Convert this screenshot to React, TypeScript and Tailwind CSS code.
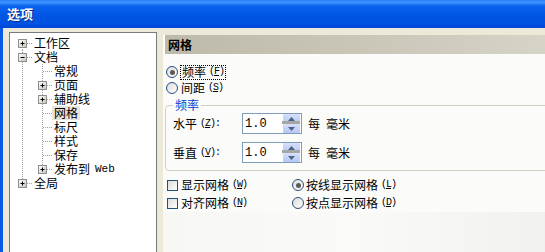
import React from "react";

const cjk = "font-['Noto_Sans_CJK_SC',sans-serif]";
const mono = "font-['Liberation_Mono',monospace] text-[10px]";

const Key = ({ k }: { k: string }) => (
  <span className={`${mono} ml-[3px] tracking-[-1px]`}>
    (<span className="underline underline-offset-1">{k}</span>)
  </span>
);

type V = "full" | "top" | "bottom" | "none";

const Cell = ({ v, h, box }: { v: V; h?: boolean; box?: "+" | "-" }) => {
  const y1 = v === "bottom" ? 7 : 0;
  const y2 = v === "top" ? 7 : 14;
  return (
    <svg width="20" height="14" className="shrink-0">
      <defs>
        <linearGradient id="bx" x1="0" y1="0" x2="1" y2="1">
          <stop offset="0" stopColor="#ffffff" />
          <stop offset="1" stopColor="#c6c3b6" />
        </linearGradient>
      </defs>
      {v !== "none" && (
        <line x1="10.5" x2="10.5" y1={y1} y2={y2} stroke="#a0a0a0" strokeDasharray="1 1" />
      )}
      {h && <line x1="11" x2="20" y1="7.5" y2="7.5" stroke="#a0a0a0" strokeDasharray="1 1" />}
      {box && (
        <g>
          <rect x="6.5" y="3.5" width="8" height="8" fill="url(#bx)" stroke="#8f8f8f" />
          <line x1="8.5" x2="12.5" y1="7.5" y2="7.5" stroke="#000" />
          {box === "+" && <line x1="10.5" x2="10.5" y1="5.5" y2="9.5" stroke="#000" />}
        </g>
      )}
    </svg>
  );
};

type Row = { label: React.ReactNode; cells: { v: V; h?: boolean; box?: "+" | "-" }[]; sel?: boolean };

const rows: Row[] = [
  { label: "工作区", cells: [{ v: "bottom", h: true, box: "+" }] },
  { label: "文档", cells: [{ v: "full", h: true, box: "-" }] },
  { label: "常规", cells: [{ v: "full" }, { v: "full", h: true }] },
  { label: "页面", cells: [{ v: "full" }, { v: "full", h: true, box: "+" }] },
  { label: "辅助线", cells: [{ v: "full" }, { v: "full", h: true, box: "+" }] },
  { label: "网格", cells: [{ v: "full" }, { v: "full", h: true }], sel: true },
  { label: "标尺", cells: [{ v: "full" }, { v: "full", h: true }] },
  { label: "样式", cells: [{ v: "full" }, { v: "full", h: true }] },
  { label: "保存", cells: [{ v: "full" }, { v: "full", h: true }] },
  {
    label: (
      <>
        发布到<span className="font-['Liberation_Mono',monospace] text-[11px] ml-[5px]">Web</span>
      </>
    ),
    cells: [{ v: "full" }, { v: "top", h: true, box: "+" }],
  },
  { label: "全局", cells: [{ v: "top", h: true, box: "+" }] },
];

const Radio = ({ on }: { on?: boolean }) => (
  <span className="w-[12px] h-[12px] rounded-full border border-[#2c4f7e] bg-gradient-to-br from-[#dcdcd7] to-white flex items-center justify-center shrink-0">
    {on && <span className="w-[5px] h-[5px] rounded-full bg-[#5a5a5a]" />}
  </span>
);

const Check = () => (
  <span className="w-[11px] h-[11px] border border-[#1c5180] bg-gradient-to-br from-[#dcdcd7] to-white shrink-0" />
);

const Arrow = ({ up }: { up?: boolean }) => (
  <svg width="7" height="4" viewBox="0 0 7 4">
    <path d={up ? "M0 4 L3.5 0 L7 4 Z" : "M0 0 L3.5 4 L7 0 Z"} fill="#4d6185" />
  </svg>
);

const Spin = () => (
  <div className="relative w-[60px] h-[21px] border border-[#7f9db9] bg-white flex items-center">
    <span className="flex-1 pl-[2px] font-['Liberation_Mono',monospace] text-[12px] text-black">1.0</span>
    <div className="flex flex-col gap-[1px] w-[17px] h-[19px] mr-[1px]">
      <div className="flex-1 rounded-[1px] bg-gradient-to-b from-[#d6e0fb] to-[#b5c7f3] flex items-center justify-center">
        <Arrow up />
      </div>
      <div className="flex-1 rounded-[1px] bg-gradient-to-b from-[#d6e0fb] to-[#b5c7f3] flex items-center justify-center">
        <Arrow />
      </div>
    </div>
    <div className="absolute right-[1px] top-[7px] w-[18px] h-[3px] bg-[#a6a6a3]" />
  </div>
);

export default function App() {
  return (
    <div className={`w-[545px] h-[252px] overflow-hidden flex flex-col bg-[#ece9d8] text-[12px] leading-[14px] text-black ${cjk}`}>
      <div className="h-[28px] shrink-0 bg-[linear-gradient(to_bottom,#2a7cf6_0%,#3d95ff_8%,#0a62f0_22%,#0055e5_55%,#0052e2_85%,#0044d8_100%)] flex items-center pl-[7px]">
        <span className="text-white font-bold text-[13px] [text-shadow:1px_1px_0_#0a2a8a]">选项</span>
      </div>
      <div className="flex flex-1 min-h-0">
        <div className="w-[3px] bg-[#0a58e6] shrink-0" />
        <div className="flex flex-1 min-w-0 pl-[6px] pt-[4px] gap-[6px]">
          <div className="w-[148px] shrink-0 bg-white border border-[#7a7a7a] pt-[3px] pl-[2px] h-[240px]">
            {rows.map((r, i) => (
              <div key={i} className="flex items-center h-[14px]">
                {r.cells.map((c, j) => (
                  <Cell key={j} {...c} />
                ))}
                <span className={`px-[2px] h-[14px] flex items-center whitespace-nowrap ${r.sel ? "bg-[#e6e4dc]" : ""}`}>
                  {r.label}
                </span>
              </div>
            ))}
          </div>
          <div className="flex-1 min-w-0 mt-[3px] flex flex-col bg-[#fbfbfa] overflow-hidden">
            <div className="ml-[2px] h-[19px] shrink-0 bg-gradient-to-r from-[#bdbaab] via-[#c9c6b8] to-[#d6d3c7] flex items-center pl-[3px]">
              <span className="font-bold">网格</span>
            </div>
            <div className="flex flex-col pl-[3px] pt-[10px]">
              <div className="flex items-center h-[16px]">
                <Radio on />
                <span className="ml-[2px] px-[1px] border border-dotted border-black flex items-center h-[15px]">
                  频率<Key k="F" />
                </span>
              </div>
              <div className="flex items-center h-[16px]">
                <Radio />
                <span className="ml-[3px] flex items-center">
                  间距<Key k="S" />
                </span>
              </div>
            </div>
            <fieldset className="ml-[2px] -mr-[20px] mt-[2px] border border-[#d0d0bf] rounded-[4px] pb-[7px]">
              <legend className="ml-[7px] px-[2px] text-[#0046d5]">频率</legend>
              <div className="flex flex-col gap-[8px] pt-[1px]">
                {[
                  ["水平", "Z"],
                  ["垂直", "V"],
                ].map(([t, k]) => (
                  <div key={k} className="flex items-center h-[21px] pl-[7px]">
                    <span className="w-[69px] flex items-center">
                      {t}
                      <Key k={k} />
                      <span className={mono}>:</span>
                    </span>
                    <Spin />
                    <span className="ml-[6px]">每</span>
                    <span className="ml-[6px]">毫米</span>
                  </div>
                ))}
              </div>
            </fieldset>
            <div className="grid grid-cols-[125px_1fr] pl-[4px] mt-[5px]">
              <div className="flex items-center h-[18px]">
                <Check />
                <span className="ml-[3px] flex items-center">显示网格<Key k="W" /></span>
              </div>
              <div className="flex items-center h-[18px]">
                <Radio on />
                <span className="ml-[2px] flex items-center">按线显示网格<Key k="L" /></span>
              </div>
              <div className="flex items-center h-[18px]">
                <Check />
                <span className="ml-[3px] flex items-center">对齐网格<Key k="N" /></span>
              </div>
              <div className="flex items-center h-[18px]">
                <Radio />
                <span className="ml-[2px] flex items-center">按点显示网格<Key k="D" /></span>
              </div>
            </div>
            <div className="flex-1 bg-gradient-to-r from-[#f7f7f4] via-[#fafaf8] to-[#f1f1ee]" />
          </div>
        </div>
      </div>
    </div>
  );
}
